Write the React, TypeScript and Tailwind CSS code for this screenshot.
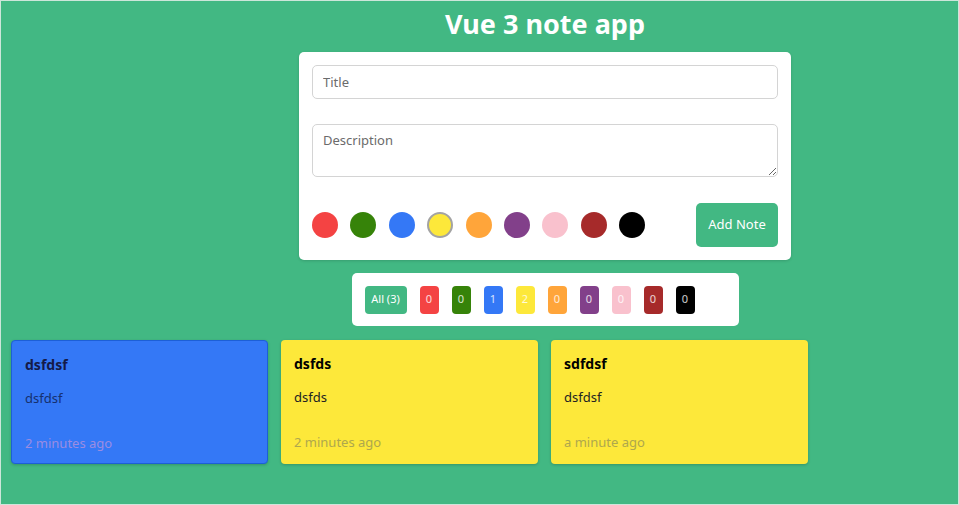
import React from "react";

const colors = [
  "#f44343",
  "#368309",
  "#3478f6",
  "#fde83a",
  "#ffa53a",
  "#82408a",
  "#f9c1cd",
  "#a62a2a",
  "#000000",
];
const counts = [0, 0, 1, 2, 0, 0, 0, 0, 0];

const notes = [
  {
    title: "dsfdsf",
    desc: "dsfdsf",
    time: "2 minutes ago",
    bg: "bg-[#3478f6] border border-[#1d5fd6]",
    titleC: "text-[#141a48]",
    descC: "text-[#16306e]",
    timeC: "text-[#9b8ce2]",
  },
  {
    title: "dsfds",
    desc: "dsfds",
    time: "2 minutes ago",
    bg: "bg-[#fde83a]",
    titleC: "text-black",
    descC: "text-[#222]",
    timeC: "text-[#aea74d]",
  },
  {
    title: "sdfdsf",
    desc: "dsfdsf",
    time: "a minute ago",
    bg: "bg-[#fde83a]",
    titleC: "text-black",
    descC: "text-[#222]",
    timeC: "text-[#aea74d]",
  },
];

export default function App() {
  return (
    <div
      className="h-[505px] w-[959px] overflow-hidden bg-[#42b883] border border-[#cde6da]"
      style={{ fontFamily: '"Noto Sans", sans-serif' }}
    >
      <div className="ml-[298px] w-[492px] flex flex-col items-center">
        <h1 className="text-[27px] leading-[36px] font-bold text-white mt-[5px]">
          Vue 3 note app
        </h1>
        <div className="mt-[10px] w-full bg-white rounded-[5px] shadow-[0_1px_3px_rgba(0,0,0,0.15)] p-[13px] flex flex-col">
          <input
            placeholder="Title"
            className="h-[34px] w-full rounded-[5px] border border-[#d4d4d4] px-[10px] text-[13px] placeholder:text-[#6b6b6b] outline-none"
          />
          <textarea
            placeholder="Description"
            className="mt-[25px] h-[53px] w-full rounded-[5px] border border-[#d4d4d4] px-[10px] py-[6px] text-[13px] placeholder:text-[#6b6b6b] outline-none resize-y"
          />
          <div className="mt-[26px] flex items-center justify-between">
            <div className="flex items-center gap-[12.4px]">
              {colors.map((c, i) => (
                <div
                  key={c}
                  className={
                    i === 3
                      ? "h-[26px] w-[26px] rounded-full border-2 border-[#a3a3a3]"
                      : "h-[26px] w-[26px] rounded-full"
                  }
                  style={{ backgroundColor: c }}
                />
              ))}
            </div>
            <button className="h-[44px] w-[82px] rounded-[5px] bg-[#42b883] text-white text-[13px]">
              Add Note
            </button>
          </div>
        </div>
        <div className="mt-[13px] w-[387px] h-[53px] bg-white rounded-[5px] px-[13px] flex items-center gap-[13px]">
          <button className="h-[28px] w-[42px] rounded-[4px] bg-[#42b883] text-white text-[11px]">
            All (3)
          </button>
          {colors.map((c, i) => (
            <button
              key={c}
              className="h-[28px] w-[19px] rounded-[4px] text-white/80 text-[11px]"
              style={{ backgroundColor: c }}
            >
              {counts[i]}
            </button>
          ))}
        </div>
      </div>
      <div className="mt-[14px] ml-[10px] flex gap-[13px]">
        {notes.map((n, i) => (
          <div
            key={i}
            className={`w-[257px] h-[124px] rounded-[4px] shadow-[0_1px_3px_rgba(0,0,0,0.2)] px-[13px] pt-[14px] flex flex-col ${n.bg}`}
          >
            <div className={`text-[14px] font-bold leading-[20px] ${n.titleC}`}>{n.title}</div>
            <div className={`mt-[13px] text-[13px] leading-[20px] ${n.descC}`}>{n.desc}</div>
            <div className={`mt-[25px] text-[13px] leading-[20px] ${n.timeC}`}>{n.time}</div>
          </div>
        ))}
      </div>
    </div>
  );
}
